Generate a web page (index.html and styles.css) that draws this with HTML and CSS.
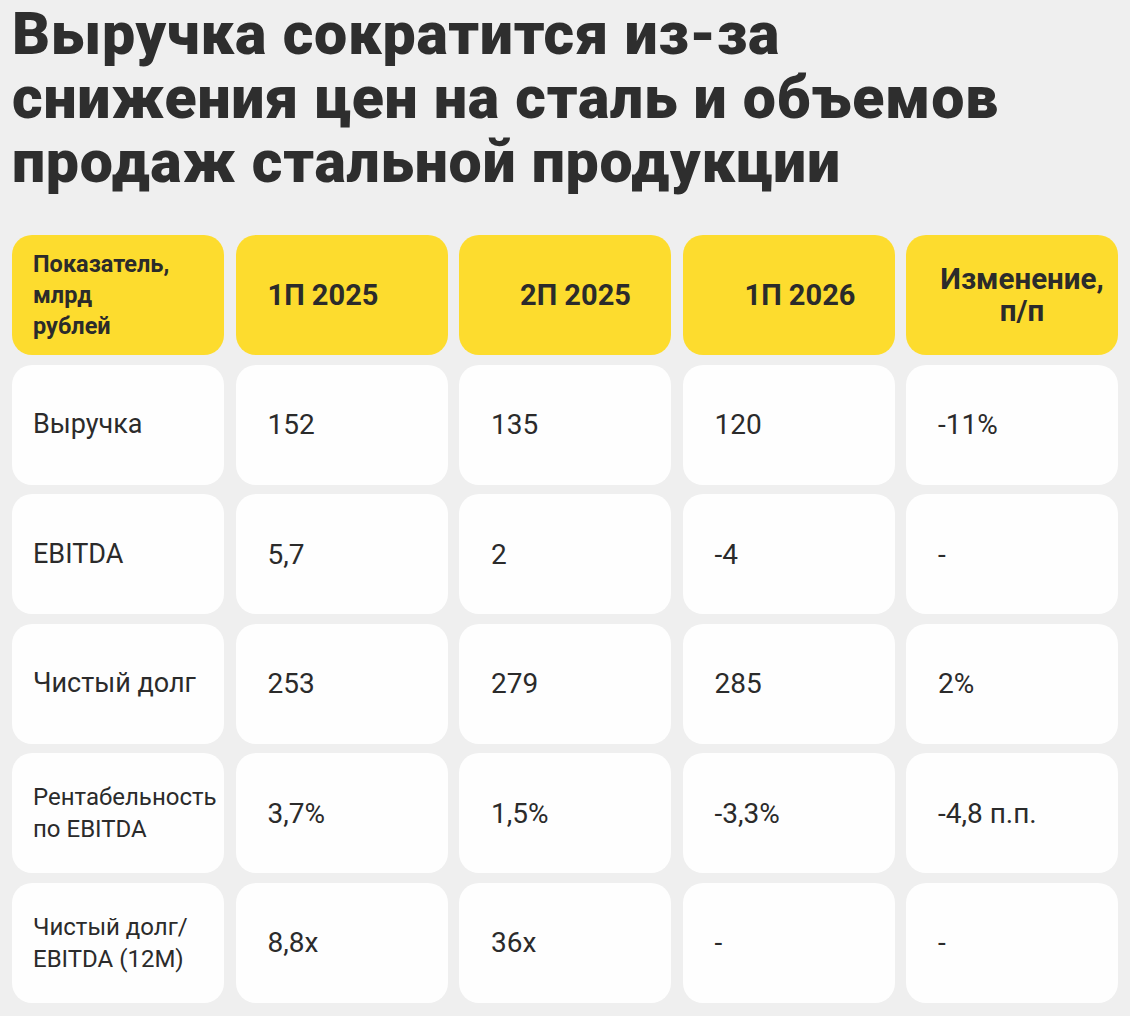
FILE: index.html
```html
<!DOCTYPE html>
<html lang="ru">
<head>
<meta charset="utf-8">
<title>Выручка</title>
<link rel="stylesheet" href="styles.css">
</head>
<body>
<main class="page">
  <h1 class="title">Выручка сократится из-за<br>снижения цен на сталь и объемов<br>продаж стальной продукции</h1>
  <div class="table">
    <div class="cell head first">Показатель,<br>млрд<br>рублей</div>
    <div class="cell head h2">1П 2025</div>
    <div class="cell head h3">2П 2025</div>
    <div class="cell head h4">1П 2026</div>
    <div class="cell head h5">Изменение,<br>п/п</div>

    <div class="cell label">Выручка</div>
    <div class="cell val">152</div>
    <div class="cell val">135</div>
    <div class="cell val">120</div>
    <div class="cell val">-11%</div>

    <div class="cell label">EBITDA</div>
    <div class="cell val">5,7</div>
    <div class="cell val">2</div>
    <div class="cell val">-4</div>
    <div class="cell val">-</div>

    <div class="cell label">Чистый долг</div>
    <div class="cell val">253</div>
    <div class="cell val">279</div>
    <div class="cell val">285</div>
    <div class="cell val">2%</div>

    <div class="cell label small">Рентабельность<br>по EBITDA</div>
    <div class="cell val">3,7%</div>
    <div class="cell val">1,5%</div>
    <div class="cell val">-3,3%</div>
    <div class="cell val">-4,8 п.п.</div>

    <div class="cell label small">Чистый долг/<br>EBITDA (12M)</div>
    <div class="cell val">8,8x</div>
    <div class="cell val">36x</div>
    <div class="cell val">-</div>
    <div class="cell val">-</div>
  </div>
</main>
</body>
</html>
```

FILE: styles.css
```css
html, body {
  margin: 0;
  padding: 0;
  background: #efefef;
}

body {
  font-family: Roboto, "Liberation Sans", sans-serif;
  color: #2b2b2b;
}

.page {
  padding: 2px 12px 0 12px;
}

.title {
  margin: 0;
  font-family: Roboto, "Liberation Sans", sans-serif;
  font-weight: 900;
  font-size: 59px;
  line-height: 64px;
  letter-spacing: 0.75px;
  color: #2e2e2e;
}

.table {
  margin-top: 41px;
  width: 1106px;
  display: grid;
  grid-template-columns: repeat(5, 1fr);
  grid-auto-rows: 120px;
  column-gap: 11.5px;
  row-gap: 9.5px;
}

.cell {
  border-radius: 20px;
  background: #fefefe;
  display: flex;
  flex-direction: column;
  justify-content: center;
  padding-left: 32px;
  font-size: 28px;
  line-height: 33px;
  font-weight: 400;
}

.head {
  background: #fddc2e;
  font-weight: 700;
  font-size: 29px;
}

.head.first {
  padding-left: 21px;
  font-size: 23.5px;
  line-height: 31px;
}

.head.h3 {
  padding-left: 61px;
}

.head.h4 {
  padding-left: 62px;
}

.head.h5 {
  padding-left: 20px;
  text-align: center;
  font-size: 29.5px;
  line-height: 32px;
}

.label {
  padding-left: 21px;
  font-size: 27px;
}

.label.small {
  font-size: 24px;
  line-height: 32px;
}
```
